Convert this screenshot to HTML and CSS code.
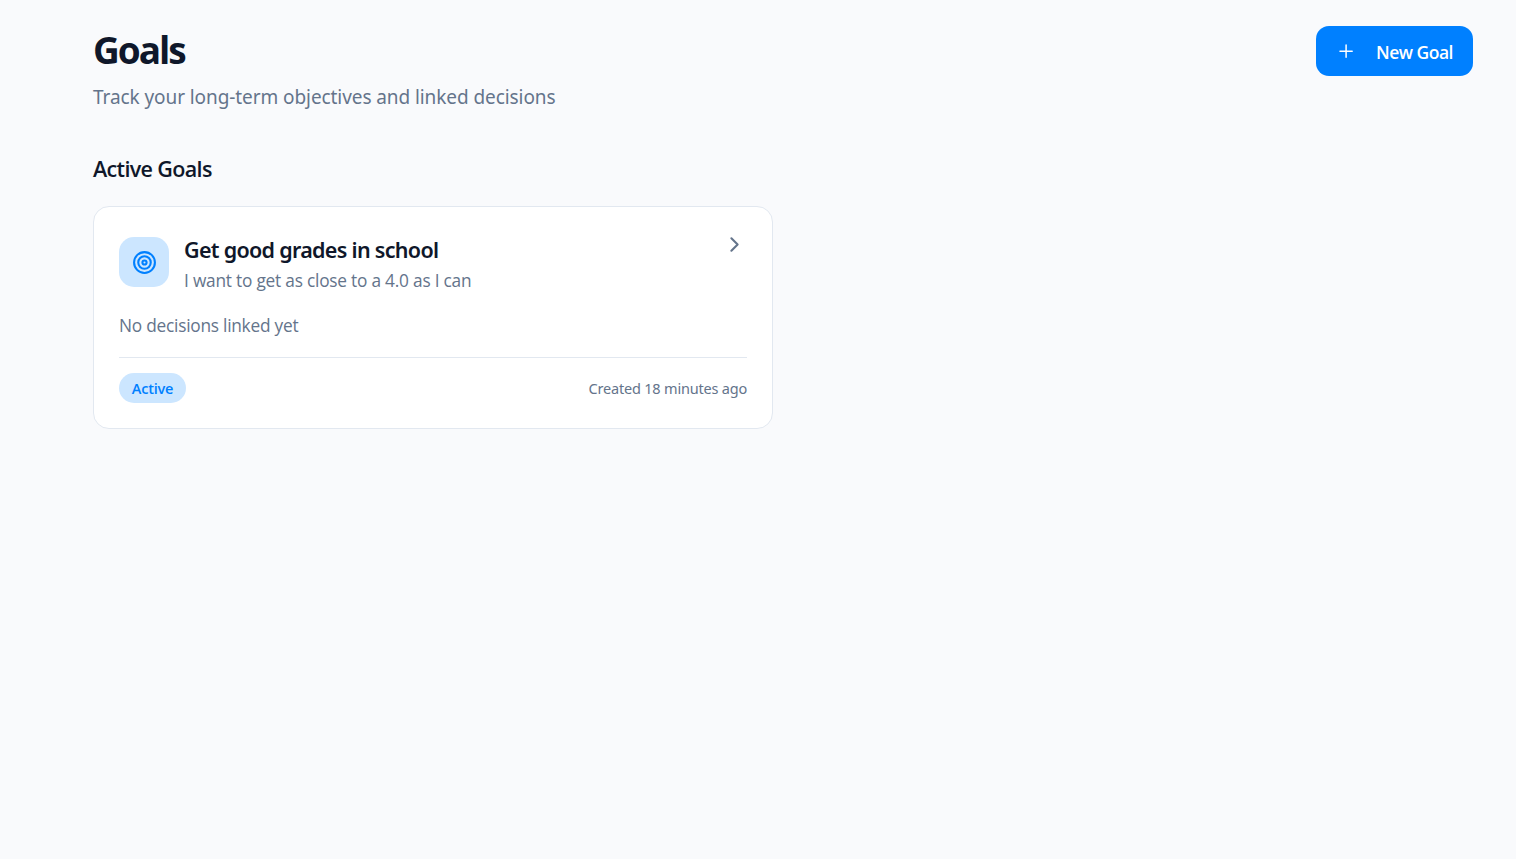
FILE: index.html
```html
<!DOCTYPE html>
<html lang="en">
<head>
<meta charset="utf-8">
<title>Goals</title>
<link rel="stylesheet" href="styles.css">
</head>
<body>
<main class="page">
  <header class="header">
    <div>
      <h1 class="title"><span>Goals</span></h1>
      <p class="subtitle">Track your long-term objectives and linked decisions</p>
    </div>
    <button class="new-goal" type="button">
      <svg class="plus" viewBox="0 0 20 20" fill="none" stroke="currentColor" stroke-width="1.5" stroke-linecap="round"><path d="M4 10.2h12.2M10.1 4v12.2"/></svg>
      <span class="new-goal-label">New Goal</span>
    </button>
  </header>
  <h2 class="section-title">Active Goals</h2>
  <section class="goals">
    <article class="card">
      <div class="card-head">
        <div class="goal-icon">
          <svg viewBox="0 0 24 24" fill="none" stroke="currentColor" stroke-width="2"><circle cx="12" cy="12" r="10"/><circle cx="12" cy="12" r="6"/><circle cx="12" cy="12" r="2"/></svg>
        </div>
        <div class="goal-text">
          <h3 class="goal-name">Get good grades in school</h3>
          <p class="goal-desc">I want to get as close to a 4.0 as I can</p>
        </div>
        <svg class="chevron" viewBox="0 0 24 24" fill="none" stroke="currentColor" stroke-width="2" stroke-linecap="round" stroke-linejoin="round"><path d="m9 18 6-6-6-6"/></svg>
      </div>
      <p class="linked">No decisions linked yet</p>
      <footer class="card-foot">
        <span class="badge"><span>Active</span></span>
        <span class="created">Created 18 minutes ago</span>
      </footer>
    </article>
  </section>
</main>
</body>
</html>
```
FILE: styles.css
```css
* { box-sizing: border-box; }
body {
  margin: 0;
  min-height: 100vh;
  background: #f9fafc;
  color: #0f172a;
  font-family: "Segoe UI", "Open Sans", "Noto Sans", sans-serif;
}
h1, h2, h3, p { margin: 0; white-space: nowrap; }
.page { padding: 25px 43px 0 93px; }
.header { display: flex; justify-content: space-between; align-items: flex-start; }
.title { font-size: 37px; line-height: 50px; font-weight: 700; letter-spacing: -2px; }
.subtitle { margin-top: 7px; font-family: "Segoe UI", "Noto Sans", sans-serif; font-size: 19px; line-height: 30px; color: #64748b; letter-spacing: -0.08px; }
.new-goal {
  display: flex;
  align-items: center;
  width: 157px;
  height: 50px;
  margin-top: 1px;
  padding: 0 20px;
  border: 0;
  border-radius: 13px;
  background: #0080ff;
  color: #fff;
  font-family: inherit;
}
.plus { width: 20px; height: 20px; margin-right: 20px; }
.new-goal-label { padding-top: 2px; font-size: 17.5px; line-height: 24px; font-weight: 600; letter-spacing: -0.5px; white-space: nowrap; }
.section-title { margin-top: 42px; font-size: 21.5px; line-height: 30px; font-weight: 600; letter-spacing: -0.65px; }
.goals { display: grid; grid-template-columns: repeat(2, 1fr); gap: 20px; margin-top: 22px; }
.card {
  height: 223px;
  padding: 24px 25px;
  border: 1px solid #e2e8f0;
  border-radius: 16px;
  background: #fff;
}
.card-head { display: flex; align-items: flex-start; }
.goal-icon {
  display: flex;
  align-items: center;
  justify-content: center;
  width: 50px;
  height: 50px;
  margin: 6px 15px 0 0;
  border-radius: 15px;
  background: #cce6ff;
  color: #0080ff;
}
.goal-icon svg { width: 25px; height: 25px; }
.goal-text { flex: 1; padding-top: 4px; }
.goal-name { font-family: "Segoe UI", "Noto Sans", sans-serif; font-size: 21.5px; line-height: 30px; font-weight: 600; letter-spacing: -0.7px; }
.goal-desc { margin-top: 3px; font-size: 17.3px; line-height: 26px; color: #64748b; letter-spacing: -0.22px; }
.chevron { width: 25px; height: 25px; color: #64748b; margin-top: 1px; }
.linked { margin-top: 19px; font-size: 17.3px; line-height: 26px; color: #64748b; letter-spacing: -0.24px; }
.card-foot {
  display: flex;
  justify-content: space-between;
  align-items: center;
  margin-top: 18px;
  padding-top: 15px;
  border-top: 1px solid #e2e8f0;
}
.badge {
  display: flex;
  align-items: center;
  justify-content: center;
  width: 67px;
  height: 30px;
  border-radius: 15px;
  background: #cce6ff;
  color: #0080ff;
  font-size: 14.5px;
  font-weight: 600;
  letter-spacing: -0.2px;
}
.created { font-family: "Segoe UI", "Noto Sans", sans-serif; font-size: 14.5px; color: #64748b; letter-spacing: -0.2px; white-space: nowrap; }
```
